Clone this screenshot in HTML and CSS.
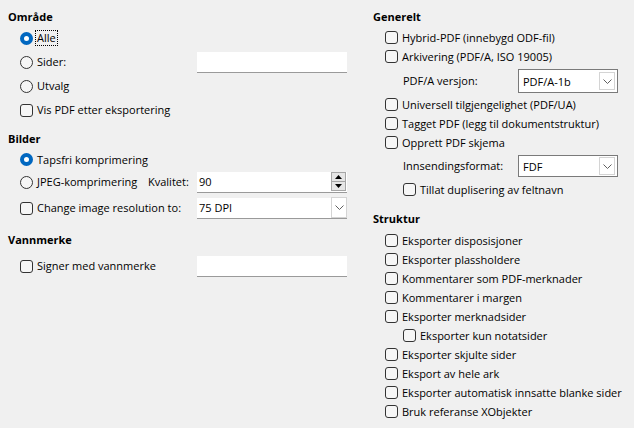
FILE: index.html
```html
<!DOCTYPE html>
<html lang="no">
<head>
<meta charset="utf-8">
<title>PDF-alternativer</title>
<link rel="stylesheet" href="styles.css">
</head>
<body>
<div class="dialog">
  <div class="col">
    <div class="hd">Område</div>
    <div class="row r24"><div class="opt"><span class="radio on"></span><span class="lbl focus">Alle</span></div></div>
    <div class="row r24 field-row">
      <div class="opt"><span class="radio"></span><span class="lbl">Sider:</span></div>
      <div class="entry"></div>
    </div>
    <div class="row r24"><div class="opt"><span class="radio"></span><span class="lbl">Utvalg</span></div></div>
    <div class="row r24"><div class="opt"><span class="cb"></span><span class="lbl">Vis PDF etter eksportering</span></div></div>

    <div class="hd mt8">Bilder</div>
    <div class="row r21 mt1"><div class="opt"><span class="radio on"></span><span class="lbl">Tapsfri komprimering</span></div></div>
    <div class="row r22 mt1 jpeg-row">
      <div class="opt"><span class="radio"></span><span class="lbl">JPEG-komprimering</span></div>
      <span class="lbl">Kvalitet:</span>
      <div class="entry spin"><span class="val">90</span>
        <div class="spin-btns">
          <span class="sb"><svg width="7" height="4" viewBox="0 0 7 4"><path d="M0 4 L3.5 0 L7 4 Z" fill="#000"/></svg></span>
          <span class="sb"><svg width="7" height="4" viewBox="0 0 7 4"><path d="M0 0 L3.5 4 L7 0 Z" fill="#000"/></svg></span>
        </div>
      </div>
    </div>
    <div class="row r22 mt4 field-row">
      <div class="opt"><span class="cb"></span><span class="lbl">Change image resolution to:</span></div>
      <div class="entry combo-flat"><span class="val">75 DPI</span>
        <span class="drop flat"><svg width="9" height="5" viewBox="0 0 9 5"><path d="M0.5 0.5 L4.5 4.5 L8.5 0.5" fill="none" stroke="#606060" stroke-width="1"/></svg></span>
      </div>
    </div>

    <div class="hd mt12">Vannmerke</div>
    <div class="row r22 mt6 field-row">
      <div class="opt"><span class="cb"></span><span class="lbl">Signer med vannmerke</span></div>
      <div class="entry"></div>
    </div>
  </div>

  <div class="col">
    <div class="hd">Generelt</div>
    <div class="row mt2"><div class="opt"><span class="cb"></span><span class="lbl">Hybrid-PDF (innebygd ODF-fil)</span></div></div>
    <div class="row"><div class="opt"><span class="cb"></span><span class="lbl">Arkivering (PDF/A, ISO 19005)</span></div></div>
    <div class="row r24 mt3 sub-field">
      <span class="lbl">PDF/A versjon:</span>
      <div class="combo"><span class="val">PDF/A-1b</span>
        <span class="drop"><svg width="9" height="5" viewBox="0 0 9 5"><path d="M0.5 0.5 L4.5 4.5 L8.5 0.5" fill="none" stroke="#606060" stroke-width="1"/></svg></span>
      </div>
    </div>
    <div class="row mt2"><div class="opt"><span class="cb"></span><span class="lbl">Universell tilgjengelighet (PDF/UA)</span></div></div>
    <div class="row"><div class="opt"><span class="cb"></span><span class="lbl">Tagget PDF (legg til dokumentstruktur)</span></div></div>
    <div class="row"><div class="opt"><span class="cb"></span><span class="lbl">Opprett PDF skjema</span></div></div>
    <div class="row r22 mt3 sub-field">
      <span class="lbl">Innsendingsformat:</span>
      <div class="combo"><span class="val">FDF</span>
        <span class="drop"><svg width="9" height="5" viewBox="0 0 9 5"><path d="M0.5 0.5 L4.5 4.5 L8.5 0.5" fill="none" stroke="#606060" stroke-width="1"/></svg></span>
      </div>
    </div>
    <div class="row mt3"><div class="opt sub"><span class="cb"></span><span class="lbl">Tillat duplisering av feltnavn</span></div></div>

    <div class="hd mt11">Struktur</div>
    <div class="row mt3"><div class="opt"><span class="cb"></span><span class="lbl">Eksporter disposisjoner</span></div></div>
    <div class="row"><div class="opt"><span class="cb"></span><span class="lbl">Eksporter plassholdere</span></div></div>
    <div class="row"><div class="opt"><span class="cb"></span><span class="lbl">Kommentarer som PDF-merknader</span></div></div>
    <div class="row"><div class="opt"><span class="cb"></span><span class="lbl">Kommentarer i margen</span></div></div>
    <div class="row"><div class="opt"><span class="cb"></span><span class="lbl">Eksporter merknadsider</span></div></div>
    <div class="row"><div class="opt sub"><span class="cb"></span><span class="lbl">Eksporter kun notatsider</span></div></div>
    <div class="row"><div class="opt"><span class="cb"></span><span class="lbl">Eksporter skjulte sider</span></div></div>
    <div class="row"><div class="opt"><span class="cb"></span><span class="lbl">Eksport av hele ark</span></div></div>
    <div class="row"><div class="opt"><span class="cb"></span><span class="lbl">Eksporter automatisk innsatte blanke sider</span></div></div>
    <div class="row"><div class="opt"><span class="cb"></span><span class="lbl">Bruk referanse XObjekter</span></div></div>
  </div>
</div>
</body>
</html>
```

FILE: styles.css
```css
* { box-sizing: border-box; }

html, body {
  margin: 0;
  background: #f0f0f0;
}

body {
  width: 634px;
  height: 428px;
  overflow: hidden;
  font-family: "Open Sans", "Noto Sans", sans-serif;
  font-size: 11px;
  color: #000;
}

.dialog {
  display: grid;
  grid-template-columns: 340px 253px;
  column-gap: 25px;
  padding: 8px 0 0 8px;
}

.col {
  display: flex;
  flex-direction: column;
}

.hd {
  font-weight: 700;
  height: 18px;
  line-height: 18px;
}

.row {
  display: flex;
  align-items: center;
  height: 19px;
}

.r21 { height: 21px; }
.r22 { height: 22px; }
.r24 { height: 24px; }

.mt1 { margin-top: 1px; }
.mt2 { margin-top: 2px; }
.mt3 { margin-top: 3px; }
.mt4 { margin-top: 4px; }
.mt6 { margin-top: 6px; }
.mt8 { margin-top: 8px; }
.mt11 { margin-top: 11px; }
.mt12 { margin-top: 12px; }

.opt {
  display: flex;
  align-items: center;
  gap: 4px;
  padding-left: 12px;
  white-space: nowrap;
}

.opt.sub { padding-left: 30px; }

.lbl {
  white-space: nowrap;
  line-height: 14px;
}

.focus {
  outline: 1px dotted #000;
  outline-offset: 0;
  padding: 0 1px;
  margin-left: -1px;
}

.cb {
  width: 13px;
  height: 13px;
  border: 1px solid #333;
  border-radius: 3px;
  background: #f6f6f6;
  flex: none;
}

.radio {
  width: 13px;
  height: 13px;
  border: 1px solid #333;
  border-radius: 50%;
  background: #f6f6f6;
  flex: none;
}

.radio.on {
  border: 4px solid #0067c0;
  background: #fff;
}

.field-row {
  display: grid;
  grid-template-columns: 189px 150px;
  align-items: center;
}

.jpeg-row {
  display: grid;
  grid-template-columns: 140px 49px 150px;
  align-items: center;
}

.entry {
  height: 21px;
  background: #fff;
  border-bottom: 1px solid #9a9a9a;
  display: flex;
  align-items: center;
}

.val {
  padding-left: 2px;
  white-space: nowrap;
}

.spin, .combo-flat {
  justify-content: space-between;
}

.spin-btns {
  display: flex;
  flex-direction: column;
  width: 15px;
  height: 19px;
  margin-right: 1px;
  border: 1px solid #a6a6a6;
  background: #e6e6e6;
}

.sb {
  flex: 1;
  display: flex;
  align-items: center;
  justify-content: center;
}

.sb + .sb { border-top: 1px solid #a6a6a6; }

.drop {
  width: 16px;
  height: 18px;
  margin-right: 2px;
  border: 1px solid #d4d4d4;
  background: #fff;
  display: flex;
  align-items: center;
  justify-content: center;
  flex: none;
}

.drop.flat {
  height: 21px;
  margin-right: 0;
}

.sub-field {
  display: grid;
  grid-template-columns: 145px 100px;
  align-items: center;
}

.sub-field > .lbl { padding-left: 30px; }

.combo {
  height: 100%;
  background: #fff;
  border: 1px solid #7a7a7a;
  display: flex;
  align-items: center;
  justify-content: space-between;
  padding-left: 2px;
}
```
